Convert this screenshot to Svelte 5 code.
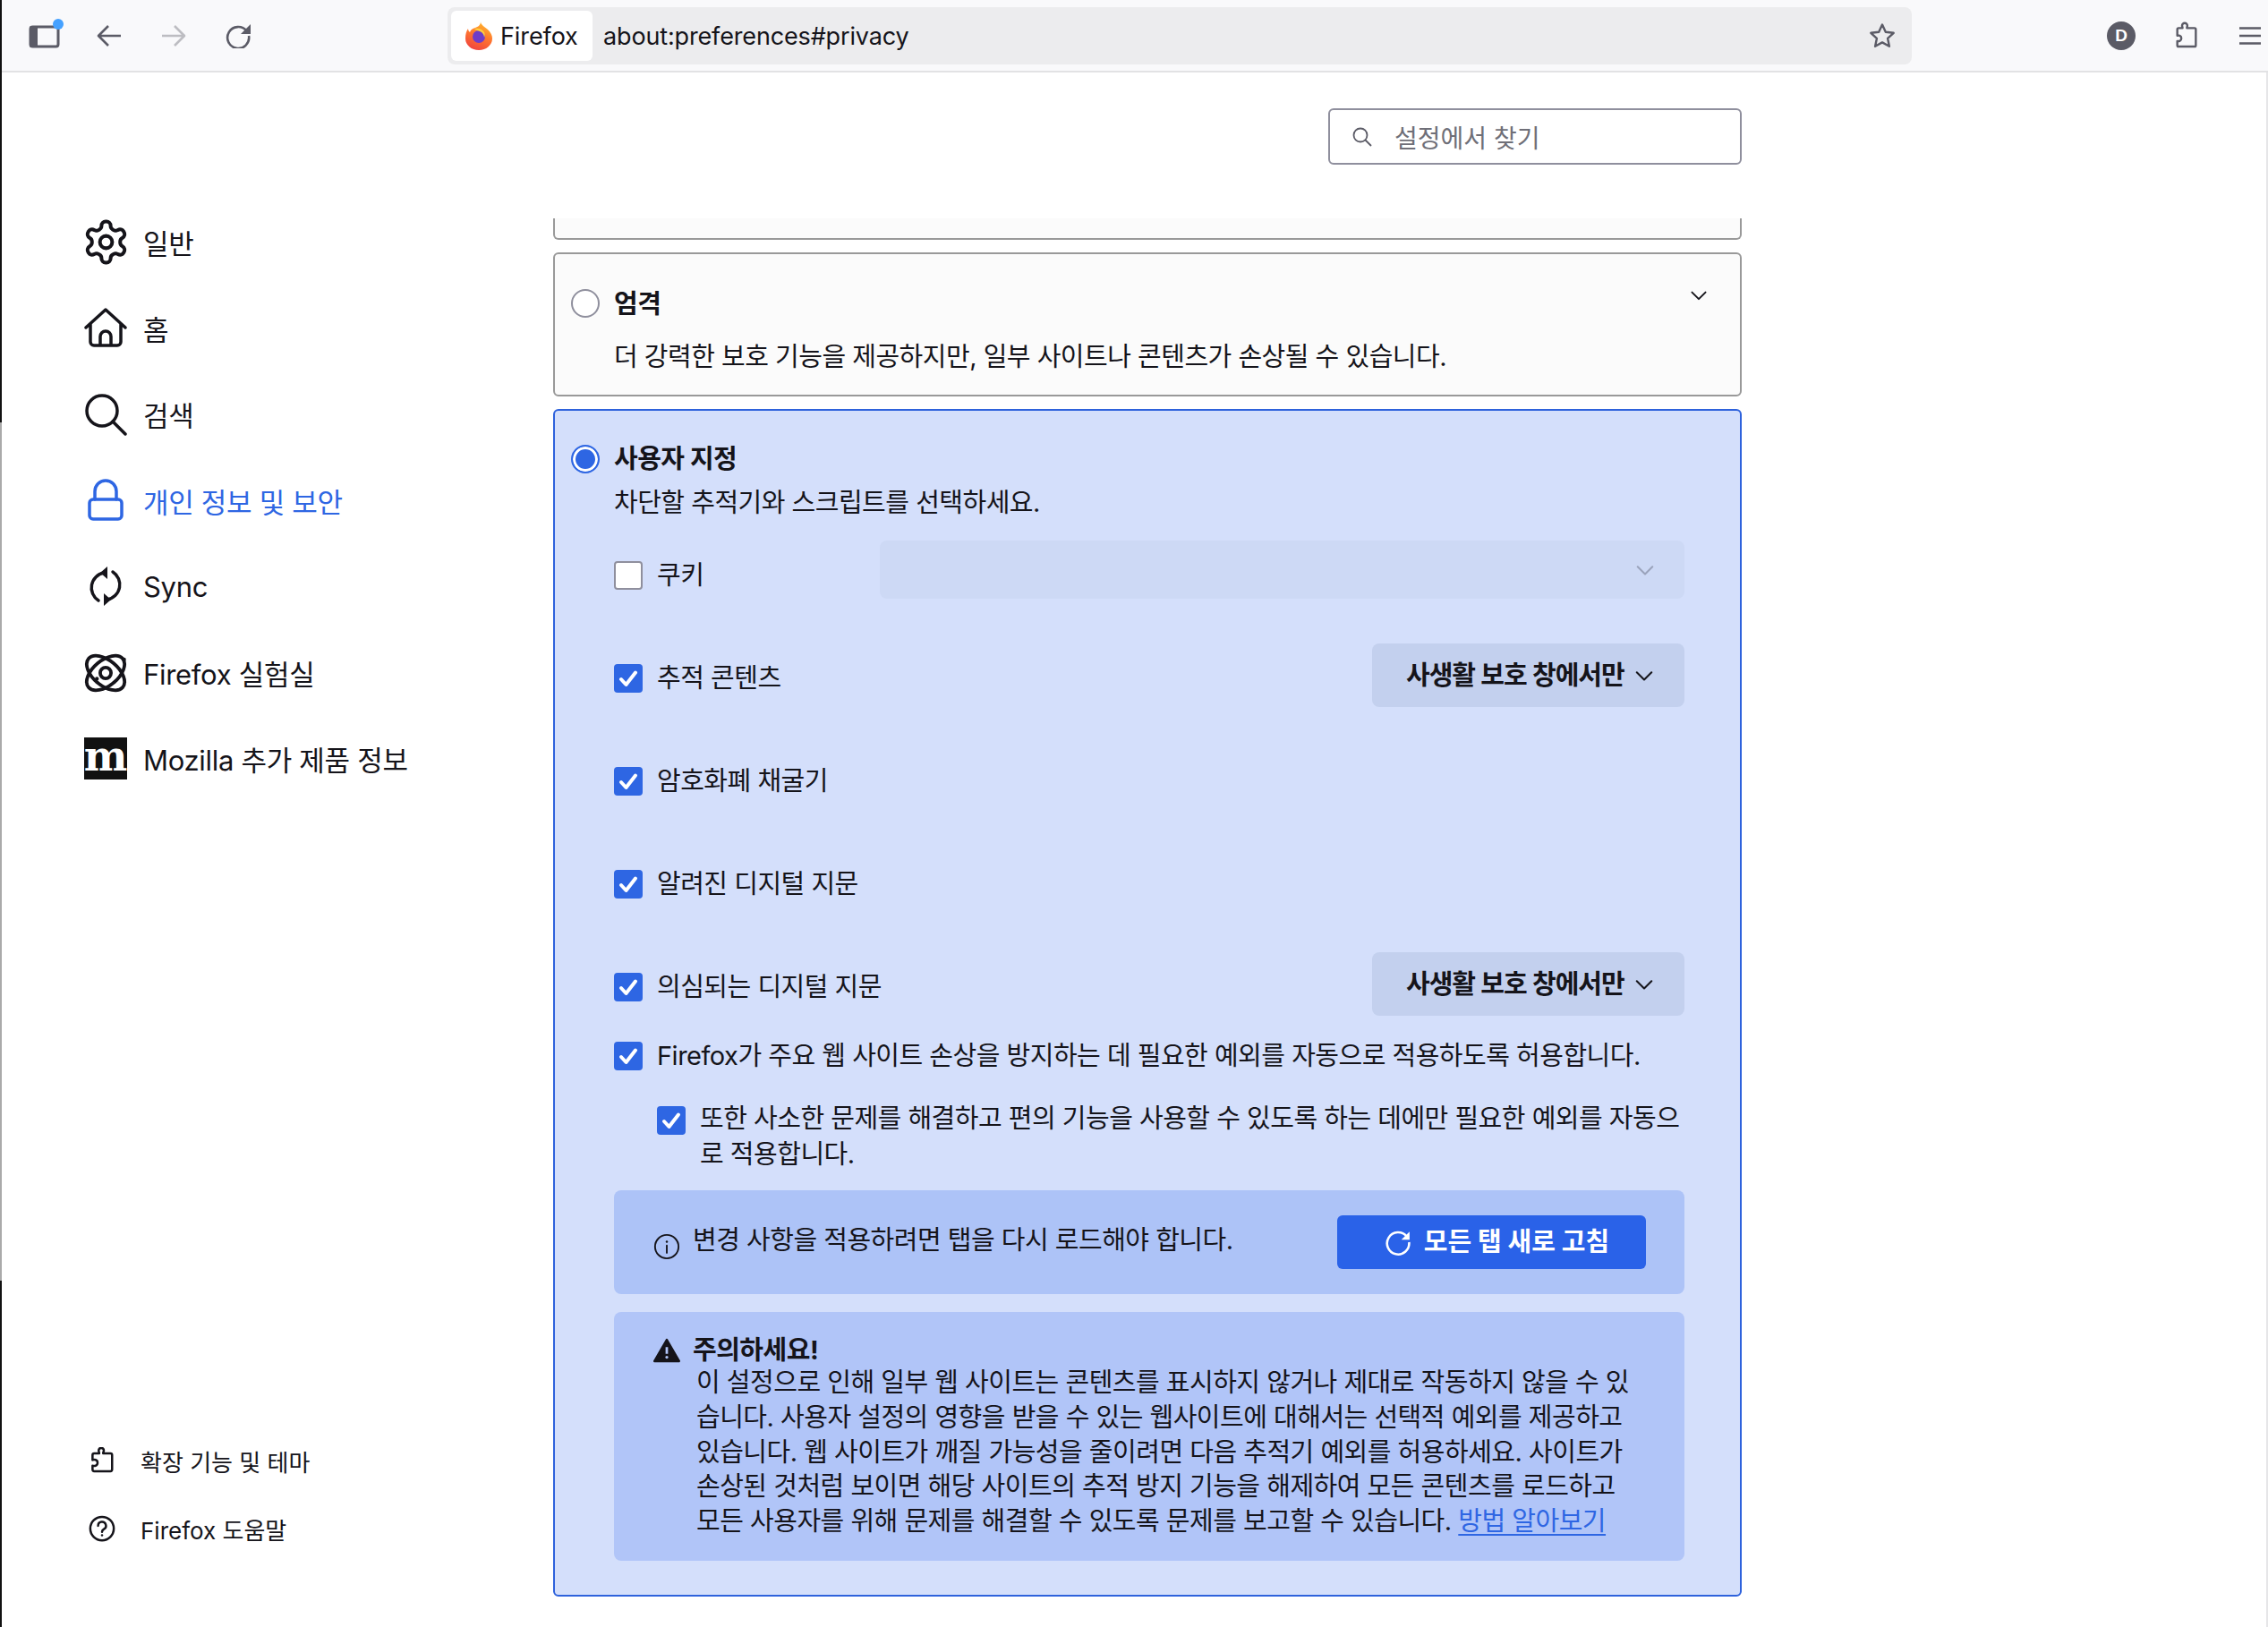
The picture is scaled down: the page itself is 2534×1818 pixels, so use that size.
<script lang="ts">
	const navItems = [
		{ id: 'general', label: '일반' },
		{ id: 'home', label: '홈' },
		{ id: 'search', label: '검색' },
		{ id: 'privacy', label: '개인 정보 및 보안', active: true },
		{ id: 'sync', label: 'Sync' },
		{ id: 'labs', label: 'Firefox 실험실' },
		{ id: 'mozilla', label: 'Mozilla 추가 제품 정보' }
	];

	const trackers = [
		{ label: '쿠키', checked: false, kind: 'select' },
		{ label: '추적 콘텐츠', checked: true, kind: 'button' },
		{ label: '암호화폐 채굴기', checked: true, kind: '' },
		{ label: '알려진 디지털 지문', checked: true, kind: '' },
		{ label: '의심되는 디지털 지문', checked: true, kind: 'button' }
	];
</script>

{#snippet check(on: boolean)}
	<span class="box" class:on>
		{#if on}
			<svg viewBox="0 0 32 32" width="32" height="32">
				<path d="M8 17l5.5 6L24 9.5" fill="none" stroke="#fff" stroke-width="4" stroke-linecap="round" stroke-linejoin="round" />
			</svg>
		{/if}
	</span>
{/snippet}

{#snippet chevron(size: number, color: string)}
	<svg viewBox="0 0 16 16" width={size} height={size} class="chev">
		<path d="M2.5 5.5L8 11l5.5-5.5" fill="none" stroke={color} stroke-width="1.4" stroke-linecap="round" stroke-linejoin="round" />
	</svg>
{/snippet}

<div class="window">
	<header class="toolbar">
		<button class="tb" aria-label="사이드바">
			<svg class="over" viewBox="0 0 36 32" width="36" height="32">
				<rect x="2" y="6" width="31" height="22" rx="2.5" fill="none" stroke="#5b5b66" stroke-width="3" />
				<rect x="1" y="5" width="9" height="24" rx="2" fill="#5b5b66" />
				<circle cx="33" cy="3" r="6" fill="#45a1ff" />
			</svg>
		</button>
		<button class="tb" aria-label="뒤로">
			<svg viewBox="0 0 28 28" width="28" height="28">
				<path d="M27 14H2M13 3L2 14l11 11" fill="none" stroke="#5b5b66" stroke-width="2.6" stroke-linejoin="round" />
			</svg>
		</button>
		<button class="tb" aria-label="앞으로">
			<svg viewBox="0 0 28 28" width="28" height="28">
				<path d="M1 14h25M15 3l11 11-11 11" fill="none" stroke="#bdbdc2" stroke-width="2.6" stroke-linejoin="round" />
			</svg>
		</button>
		<button class="tb" aria-label="새로 고침">
			<svg viewBox="0 0 28 28" width="28" height="28">
				<path d="M23.5 8.5A12 12 0 1 0 26 14" fill="none" stroke="#5b5b66" stroke-width="2.6" />
				<path d="M28 1v11H17z" fill="#5b5b66" />
			</svg>
		</button>

		<div class="urlbar">
			<div class="chip">
				<svg viewBox="0 0 32 32" width="32" height="32">
					<defs>
						<linearGradient id="fx" x1="0.7" y1="0" x2="0.3" y2="1">
							<stop offset="0" stop-color="#ffbd2e" />
							<stop offset="0.45" stop-color="#ff7a2e" />
							<stop offset="1" stop-color="#f0433f" />
						</linearGradient>
					</defs>
					<path d="M18 0c0 4 5 6 8 9 3 3 5 6 5 10a15 13 0 0 1-30 0c0-5 1-8 3-11 0 2 1 3 2 4 1-3 3-4 6-5 3-1 6-3 6-7z" fill="url(#fx)" />
					<circle cx="16" cy="17" r="7" fill="#6e3cc9" />
					<path d="M11 8c4-1 9 0 11 4 1 2 1 4 0 6 0-3-2-6-5-7-2-1-4-1-6-3z" fill="#ffcf3d" />
				</svg>
				<span>Firefox</span>
			</div>
			<span class="url">about:preferences#privacy</span>
			<svg class="star" viewBox="0 0 32 32" width="32" height="32">
				<path d="M16 3.5l3.8 8.2 8.9 1.1-6.6 6.1 1.8 8.9L16 23.4l-7.9 4.4 1.8-8.9-6.6-6.1 8.9-1.1z" fill="none" stroke="#5b5b66" stroke-width="2.4" stroke-linejoin="round" />
			</svg>
		</div>

		<div class="tb-right">
			<button class="tb" aria-label="계정"><span class="avatar">D</span></button>
			<button class="tb" aria-label="확장 기능">
				<svg viewBox="0 0 24 24" width="32" height="32">
					<path d="M9 3.5a2.2 2.2 0 0 1 4.4 0c0 .8-.4 1.2-.4 2h6.5a1 1 0 0 1 1 1V20a1 1 0 0 1-1 1H6a1 1 0 0 1-1-1v-3.6c1 .3 3.4.3 3.4-2.3S6 11.5 5 11.9V6.5a1 1 0 0 1 1-1h3.4c0-.8-.4-1.2-.4-2z" fill="none" stroke="#5b5b66" stroke-width="1.8" stroke-linejoin="round" />
				</svg>
			</button>
			<button class="tb" aria-label="메뉴">
				<svg viewBox="0 0 24 24" width="24" height="24">
					<path d="M0 3.5h24M0 12h24M0 20.5h24" stroke="#5b5b66" stroke-width="2.4" />
				</svg>
			</button>
		</div>
	</header>

	<div class="page">
		<aside class="sidebar">
			<nav class="nav">
				{#each navItems as item}
					<div class="nav-item" class:active={item.active}>
						<span class="nav-icon">
							{#if item.id === 'general'}
								<svg viewBox="0 0 24 24" width="55" height="55" class="line">
									<path d="M12.22 2h-.44a2 2 0 0 0-2 2v.18a2 2 0 0 1-1 1.73l-.43.25a2 2 0 0 1-2 0l-.15-.08a2 2 0 0 0-2.73.73l-.22.38a2 2 0 0 0 .73 2.73l.15.1a2 2 0 0 1 1 1.72v.51a2 2 0 0 1-1 1.74l-.15.09a2 2 0 0 0-.73 2.73l.22.38a2 2 0 0 0 2.73.73l.15-.08a2 2 0 0 1 2 0l.43.25a2 2 0 0 1 1 1.73V20a2 2 0 0 0 2 2h.44a2 2 0 0 0 2-2v-.18a2 2 0 0 1 1-1.73l.43-.25a2 2 0 0 1 2 0l.15.08a2 2 0 0 0 2.73-.73l.22-.39a2 2 0 0 0-.73-2.73l-.15-.08a2 2 0 0 1-1-1.74v-.5a2 2 0 0 1 1-1.74l.15-.09a2 2 0 0 0 .73-2.73l-.22-.38a2 2 0 0 0-2.73-.73l-.15.08a2 2 0 0 1-2 0l-.43-.25a2 2 0 0 1-1-1.73V4a2 2 0 0 0-2-2z" />
									<circle cx="12" cy="12" r="3" />
								</svg>
							{:else if item.id === 'home'}
								<svg viewBox="0 0 24 24" width="48" height="48" class="line">
									<path d="M1 12L12 2l11 10M3.5 10v10a2 2 0 0 0 2 2h13a2 2 0 0 0 2-2V10M9 22v-5a3 3 0 0 1 6 0v5" />
								</svg>
							{:else if item.id === 'search'}
								<svg viewBox="0 0 24 24" width="48" height="48" class="line">
									<circle cx="10" cy="10" r="8.5" />
									<path d="M16 16l7 7" />
								</svg>
							{:else if item.id === 'privacy'}
								<svg viewBox="0 0 24 24" width="48" height="48" class="line blue">
									<path d="M6 11.5V7a6 6 0 0 1 12 0v4.5" />
									<rect x="3" y="11.5" width="18" height="11" rx="2" />
								</svg>
							{:else if item.id === 'sync'}
								<svg viewBox="0 0 24 24" width="48" height="48" class="line">
									<path d="M11 4.5A8.5 8.5 0 0 0 8 20M13 19.5A8.5 8.5 0 0 0 16 4" />
									<path d="M13 1v7L9 4.5zM11 23v-7l4 3.5z" fill="#15141a" stroke="none" />
								</svg>
							{:else if item.id === 'labs'}
								<svg viewBox="0 0 24 24" width="52" height="52" class="line">
									<ellipse cx="12" cy="12" rx="11.5" ry="6.5" transform="rotate(40 12 12)" />
									<ellipse cx="12" cy="12" rx="11.5" ry="6.5" transform="rotate(-40 12 12)" />
									<circle cx="12" cy="12" r="2.8" />
									<circle cx="21.5" cy="5" r="1" fill="#15141a" stroke="none" />
									<circle cx="7.5" cy="15" r="1" fill="#15141a" stroke="none" />
								</svg>
							{:else}
								<span class="moz">m</span>
							{/if}
						</span>
						<span>{item.label}</span>
					</div>
				{/each}
			</nav>
			<div class="foot">
				<div class="foot-item">
					<svg viewBox="0 0 24 24" width="30" height="30" class="line thick">
						<path d="M9 3a2.3 2.3 0 0 1 4.6 0c0 1-.6 1.5-.6 2.500h6.500a1.500 1.500 0 0 1 1.500 1.500v13a1.500 1.500 0 0 1-1.500 1.500H5a1.500 1.500 0 0 1-1.500-1.500v-3.500c1.500.5 4.500.5 4.500-2.500s-3-3-4.500-2.500V7A1.500 1.500 0 0 1 5 5.500h4.500c0-1-.5-1.500-.5-2.500z" />
					</svg>
					<span>확장 기능 및 테마</span>
				</div>
				<div class="foot-item">
					<svg viewBox="0 0 24 24" width="30" height="30" class="line thick">
						<circle cx="12" cy="12" r="10.5" />
						<path d="M8.5 9.5a3.5 3.5 0 1 1 5.2 3c-1 .6-1.7 1.2-1.7 2.5" />
						<circle cx="12" cy="18" r="1" fill="#15141a" stroke="none" />
					</svg>
					<span>Firefox 도움말</span>
				</div>
			</div>
		</aside>

		<main class="content">
			<div class="search">
				<svg viewBox="0 0 24 24" width="24" height="24">
					<circle cx="10" cy="10" r="7.5" fill="none" stroke="#5b5b66" stroke-width="1.8" />
					<path d="M15.5 15.5l6.5 6.5" stroke="#5b5b66" stroke-width="1.8" />
				</svg>
				<span>설정에서 찾기</span>
			</div>

			<div class="scroller">
				<div class="card clipped"></div>

				<section class="card strict">
					<div class="head">
						<span class="radio"></span>
						<strong>엄격</strong>
						<span class="card-chev">{@render chevron(22, '#15141a')}</span>
					</div>
					<p class="strict-desc">더 강력한 보호 기능을 제공하지만, 일부 사이트나 콘텐츠가 손상될 수 있습니다.</p>
				</section>

				<section class="card custom">
					<div class="head">
						<span class="radio on"></span>
						<strong>사용자 지정</strong>
					</div>
					<p class="custom-desc">차단할 추적기와 스크립트를 선택하세요.</p>

					<div class="rows">
						{#each trackers as row}
							<div class="row">
								{@render check(row.checked)}
								<span class="row-label" class:wide={row.kind === 'select'}>{row.label}</span>
								{#if row.kind === 'select'}
									<div class="select">{@render chevron(24, '#9aa3bb')}</div>
								{:else if row.kind === 'button'}
									<div class="menu-btn">사생활 보호 창에서만 {@render chevron(24, '#15141a')}</div>
								{/if}
							</div>
						{/each}
					</div>

					<div class="line-row">
						{@render check(true)}
						<span>Firefox가 주요 웹 사이트 손상을 방지하는 데 필요한 예외를 자동으로 적용하도록 허용합니다.</span>
					</div>
					<div class="line-row nested">
						{@render check(true)}
						<span>또한 사소한 문제를 해결하고 편의 기능을 사용할 수 있도록 하는 데에만 필요한 예외를 자동으<br />로 적용합니다.</span>
					</div>

					<div class="info">
						<svg viewBox="0 0 24 24" width="30" height="30" class="line thin">
							<circle cx="12" cy="12" r="10.5" />
							<path d="M12 11v6.5" />
							<circle cx="12" cy="7.5" r="1" fill="#15141a" stroke="none" />
						</svg>
						<span class="info-text">변경 사항을 적용하려면 탭을 다시 로드해야 합니다.</span>
						<div class="reload">
							<svg viewBox="0 0 28 28" width="30" height="30">
								<path d="M23 8A11.5 11.5 0 1 0 25.5 14" fill="none" stroke="#fff" stroke-width="2.4" />
								<path d="M26 3v8.5h-8.5z" fill="#fff" />
							</svg>
							모든 탭 새로 고침
						</div>
					</div>

					<div class="warn">
						<div class="warn-head">
							<svg viewBox="0 0 24 24" width="30" height="30">
								<path d="M12 2.5L23 21.5H1z" fill="#15141a" stroke="#15141a" stroke-width="2" stroke-linejoin="round" />
								<path d="M12 9v6" stroke="#b1c5f8" stroke-width="2.2" />
								<circle cx="12" cy="18" r="1.3" fill="#b1c5f8" />
							</svg>
							<strong>주의하세요!</strong>
						</div>
						<p>
							이 설정으로 인해 일부 웹 사이트는 콘텐츠를 표시하지 않거나 제대로 작동하지 않을 수 있<br />
							습니다. 사용자 설정의 영향을 받을 수 있는 웹사이트에 대해서는 선택적 예외를 제공하고<br />
							있습니다. 웹 사이트가 깨질 가능성을 줄이려면 다음 추적기 예외를 허용하세요. 사이트가<br />
							손상된 것처럼 보이면 해당 사이트의 추적 방지 기능을 해제하여 모든 콘텐츠를 로드하고<br />
							모든 사용자를 위해 문제를 해결할 수 있도록 문제를 보고할 수 있습니다. <a href="#learn">방법 알아보기</a>
						</p>
					</div>
				</section>
			</div>
		</main>
	</div>
</div>

<style>
	:global(body) {
		background: #fff;
		overflow: hidden;
	}

	.window {
		border-left: 2px solid;
		border-image: linear-gradient(#111 0 472px, #aaa 472px 1430px, #111 1430px) 1;
		box-sizing: border-box;
		color: #15141a;
		display: flex;
		flex-direction: column;
		font-family: Inter, 'Noto Sans CJK KR', sans-serif;
		height: 1818px;
		overflow: hidden;
		width: 2534px;
	}

	.toolbar {
		align-items: center;
		background: #f9f9fb;
		border-bottom: 2px solid #e2e2e4;
		box-sizing: border-box;
		display: flex;
		flex: none;
		height: 81px;
		padding: 1px 0 0 12px;
	}

	.tb {
		align-items: center;
		background: none;
		border: 0;
		display: flex;
		height: 64px;
		justify-content: center;
		padding: 0;
		width: 72px;
	}

	.over {
		overflow: visible;
	}

	.urlbar {
		align-items: center;
		background: #ececee;
		border-radius: 8px;
		display: flex;
		height: 64px;
		margin-left: 198px;
		padding-left: 4px;
		width: 1632px;
	}

	.chip {
		align-items: center;
		background: #fff;
		border-radius: 6px;
		box-sizing: border-box;
		display: flex;
		font-size: 27px;
		gap: 8px;
		height: 56px;
		letter-spacing: -0.1px;
		padding-left: 15px;
		width: 158px;
	}

	.url {
		font-size: 27px;
		letter-spacing: -0.15px;
		margin-left: 12px;
		margin-top: 1px;
	}

	.star {
		margin-left: auto;
		margin-right: 17px;
	}

	.tb-right {
		display: flex;
		margin-left: auto;
		margin-right: -16px;
	}

	.avatar {
		align-items: center;
		background: #5b5b66;
		border-radius: 50%;
		color: #fff;
		display: flex;
		font-size: 19px;
		font-weight: 700;
		height: 32px;
		justify-content: center;
		width: 32px;
	}

	.page {
		border-right: 2px solid #e6e6e8;
		display: flex;
		flex: 1;
		min-height: 0;
	}

	.sidebar {
		box-sizing: border-box;
		display: flex;
		flex: none;
		flex-direction: column;
		justify-content: space-between;
		padding: 141px 0 72px;
		width: 616px;
	}

	.nav-item {
		align-items: center;
		display: flex;
		font-size: 31px;
		height: 96.3px;
		letter-spacing: -0.3px;
		padding-left: 92px;
	}

	.nav-item.active {
		color: #2e66e3;
	}

	.nav-icon {
		align-items: center;
		display: flex;
		flex: none;
		height: 48px;
		justify-content: center;
		margin-right: 18px;
		width: 48px;
	}

	.nav-icon svg {
		flex: none;
	}

	.line {
		fill: none;
		stroke: #15141a;
		stroke-linecap: round;
		stroke-linejoin: round;
		stroke-width: 1.75;
	}

	.line.blue {
		stroke: #2e66e3;
	}

	.line.thick {
		stroke-width: 2;
	}

	.line.thin {
		stroke-width: 1.5;
	}

	.moz {
		align-items: center;
		background: #111;
		box-sizing: border-box;
		color: #fff;
		display: flex;
		font-family: 'DejaVu Serif', serif;
		font-size: 46px;
		font-weight: 700;
		height: 47px;
		justify-content: center;
		line-height: 30px;
		padding-bottom: 6px;
		width: 48px;
	}

	.foot-item {
		align-items: center;
		display: flex;
		font-size: 26px;
		gap: 28px;
		height: 76px;
		padding-left: 97px;
	}

	.content {
		display: flex;
		flex-direction: column;
		width: 1328px;
	}

	.search {
		align-items: center;
		align-self: flex-end;
		border: 2px solid #8f8f9d;
		border-radius: 6px;
		box-sizing: border-box;
		color: #6f6f78;
		display: flex;
		font-size: 28px;
		gap: 24px;
		height: 63px;
		margin-top: 40px;
		padding-left: 24px;
		width: 462px;
	}

	.scroller {
		display: flex;
		flex-direction: column;
		gap: 14px;
		margin-top: 60px;
	}

	.card {
		background: #fbfbfb;
		border: 2px solid #999;
		border-radius: 6px;
		box-sizing: border-box;
		font-size: 29px;
		letter-spacing: -0.5px;
		line-height: 44px;
		padding: 0 17px 0 18px;
	}

	.clipped {
		border-radius: 0 0 6px 6px;
		border-top: 0;
		height: 24px;
	}

	.strict {
		height: 161px;
		padding-top: 32px;
	}

	.strict strong {
		margin-top: 2px;
	}

	.head {
		align-items: center;
		display: flex;
		gap: 16px;
	}

	.card-chev {
		display: flex;
		margin-left: auto;
		margin-right: 18px;
		margin-top: -18px;
	}

	.radio {
		background: #fff;
		border: 2px solid #8f8f9d;
		border-radius: 50%;
		box-sizing: border-box;
		flex: none;
		height: 32px;
		width: 32px;
	}

	.radio.on {
		background: #2e66e3;
		border: 2px solid #2e66e3;
		box-shadow: inset 0 0 0 3px #fff;
	}

	.strict-desc {
		margin: 15px 0 0 48px;
	}

	.custom {
		background: #d4dffb;
		border-color: #2e62dc;
		height: 1327px;
		padding-top: 32px;
	}

	.custom-desc {
		margin: 5px 0 0 48px;
	}

	.rows {
		margin-bottom: -2px;
		margin-top: 1px;
	}

	.row {
		align-items: center;
		display: flex;
		height: 115px;
		margin-left: 48px;
		margin-right: 45px;
	}

	.box {
		align-items: center;
		background: #fff;
		border: 2px solid #8f8f9d;
		border-radius: 4px;
		box-sizing: border-box;
		display: flex;
		flex: none;
		height: 32px;
		justify-content: center;
		width: 32px;
	}

	.box.on {
		background: #2e66e3;
		border: 0;
	}

	.row-label {
		margin-left: 16px;
	}

	.row-label.wide {
		flex: none;
		width: 249px;
	}

	.select {
		align-items: center;
		background: #cdd9f5;
		border-radius: 8px;
		display: flex;
		flex: 1;
		height: 65px;
		justify-content: flex-end;
		margin-bottom: 12px;
		padding-right: 32px;
	}

	.menu-btn {
		align-items: center;
		background: #c3d0ee;
		border-radius: 8px;
		box-sizing: border-box;
		display: flex;
		font-weight: 600;
		gap: 8px;
		height: 71px;
		letter-spacing: -1px;
		margin-bottom: 6px;
		margin-left: auto;
		padding: 0 33px 0 38px;
		width: 349px;
	}

	.menu-btn svg {
		margin-left: auto;
	}

	.line-row {
		align-items: flex-start;
		display: flex;
		gap: 16px;
		margin-left: 48px;
		white-space: nowrap;
	}

	.line-row .box {
		margin-top: 6px;
	}

	.line-row.nested {
		line-height: 40px;
		margin-left: 96px;
		margin-top: 28px;
	}

	.info {
		align-items: center;
		background: #adc3f7;
		border-radius: 8px;
		display: flex;
		height: 116px;
		margin: 20px 45px 0 48px;
		padding: 0 43px 0 44px;
	}

	.info > svg {
		margin-top: 10px;
	}

	.info-text {
		margin-left: 14px;
		margin-top: -5px;
	}

	.reload {
		align-items: center;
		background: #2a62e8;
		border-radius: 6px;
		box-sizing: border-box;
		color: #fff;
		display: flex;
		font-weight: 700;
		gap: 14px;
		height: 60px;
		justify-content: center;
		letter-spacing: 0;
		margin-left: auto;
		padding-left: 12px;
		width: 345px;
	}

	.warn {
		background: #b1c5f8;
		border-radius: 8px;
		box-sizing: border-box;
		height: 278px;
		margin: 20px 45px 0 48px;
		padding: 23px 44px 0;
	}

	.warn-head {
		align-items: center;
		display: flex;
		font-size: 29px;
		gap: 14px;
		height: 40px;
	}

	.warn p {
		line-height: 38.8px;
		margin: -3px 0 0 48px;
		white-space: nowrap;
	}

	.warn a {
		color: #2e66e3;
		text-decoration-thickness: 2px;
		text-underline-offset: 4px;
	}
</style>
